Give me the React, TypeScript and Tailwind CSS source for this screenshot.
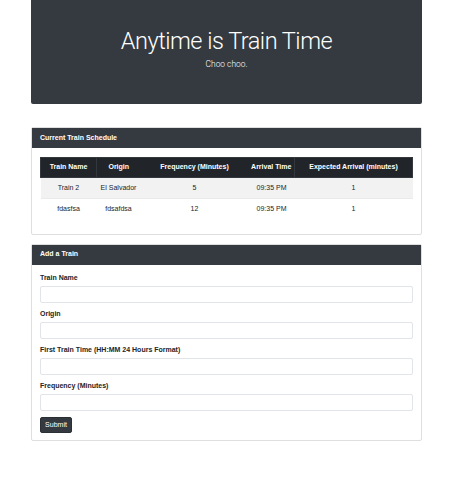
import React from 'react';

const trains = [
  { name: 'Train 2', origin: 'El Salvador', frequency: '5', arrival: '09:35 PM', minutes: '1' },
  { name: 'fdasfsa', origin: 'fdsafdsa', frequency: '12', arrival: '09:35 PM', minutes: '1' },
];

const fields = [
  'Train Name',
  'Origin',
  'First Train Time (HH:MM 24 Hours Format)',
  'Frequency (Minutes)',
];

const App: React.FC = () => {
  return (
    <div className="min-h-[500px] bg-white text-[#212529] font-['Liberation_Sans',Arial,sans-serif]">
      <div className="w-[391px] ml-[31px]">
        <div className="h-[104px] bg-[#343a40] rounded-b-[2px] flex flex-col items-center pt-[27px] text-white">
          <h1 className="font-['Roboto',sans-serif] font-light text-[23.5px] leading-[28px] tracking-[-0.5px]">
            Anytime is Train Time
          </h1>
          <p className="font-['Roboto',sans-serif] font-light text-[8.4px] leading-[12px] mt-[3px]">Choo choo.</p>
        </div>

        <div className="mt-[23px] border border-[#dfdfdf] rounded-[2px]">
          <div className="h-[20px] bg-[#343a40] text-white font-bold text-[7px] flex items-center px-[8px]">
            Current Train Schedule
          </div>
          <div className="px-[8px] pt-[9px] pb-[14px]">
            <table className="w-full table-fixed border-collapse text-[7px] text-center">
              <colgroup>
                <col className="w-[56px]" />
                <col className="w-[44px]" />
                <col className="w-[108px]" />
                <col className="w-[46px]" />
                <col />
              </colgroup>
              <thead>
                <tr className="bg-[#212529] text-white h-[20px]">
                  <th className="border border-[#32383e] font-bold">Train Name</th>
                  <th className="border-y border-[#32383e] font-bold">Origin</th>
                  <th className="border-y border-[#32383e] font-bold">Frequency (Minutes)</th>
                  <th className="border-y border-[#32383e] font-bold">Arrival Time</th>
                  <th className="border border-[#32383e] font-bold">Expected Arrival (minutes)</th>
                </tr>
              </thead>
              <tbody>
                {trains.map((t, i) => (
                  <tr key={i} className={`h-[21px] ${i % 2 === 0 ? 'bg-[#f2f2f2]' : 'bg-white border-t border-[#e8eaec]'}`}>
                    <td>{t.name}</td>
                    <td>{t.origin}</td>
                    <td>{t.frequency}</td>
                    <td>{t.arrival}</td>
                    <td>{t.minutes}</td>
                  </tr>
                ))}
              </tbody>
            </table>
          </div>
        </div>

        <div className="mt-[9px] border border-[#dfdfdf] rounded-[2px]">
          <div className="h-[20px] bg-[#343a40] text-white font-bold text-[7px] flex items-center px-[8px]">
            Add a Train
          </div>
          <form className="px-[8px] pt-[8px] pb-[7px]" onSubmit={(e) => e.preventDefault()}>
            {fields.map((label) => (
              <div key={label} className="mb-[6px]">
                <label className="block font-bold text-[7px] leading-[10px] mb-[3px]">{label}</label>
                <input
                  type="text"
                  className="block w-full h-[17px] border border-[#e1e4e8] rounded-[2px] bg-white"
                />
              </div>
            ))}
            <button
              type="submit"
              className="block mt-[1px] w-[32px] h-[16px] bg-[#343a40] text-white text-[7px] leading-[14px] rounded-[2px] border border-[#2b3035]"
            >
              Submit
            </button>
          </form>
        </div>
      </div>
    </div>
  );
};

export default App;
